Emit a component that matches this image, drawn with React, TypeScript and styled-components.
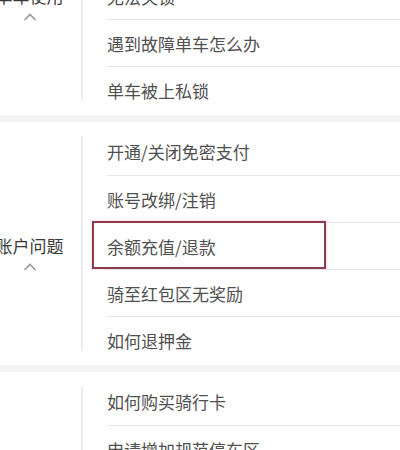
import React from 'react'
import styled, { createGlobalStyle } from 'styled-components'

const GlobalStyle = createGlobalStyle`
  html, body {
    margin: 0;
    padding: 0;
    background: #f4f4f4;
    overflow: hidden;
  }
  body {
    font-family: "Noto Sans CJK SC", "Noto Sans", sans-serif;
  }
`

interface Group {
  title: string
  items: string[]
  highlight?: number
}

const groups: Group[] = [
  {
    title: '单车使用',
    items: ['扫码开不了锁', '关锁后仍在计费', '无法关锁', '遇到故障单车怎么办', '单车被上私锁']
  },
  {
    title: '账户问题',
    items: ['开通/关闭免密支付', '账号改绑/注销', '余额充值/退款', '骑至红包区无奖励', '如何退押金'],
    highlight: 2
  },
  {
    title: '骑行卡',
    items: ['如何购买骑行卡', '申请增加规范停车区', '骑行卡退款', '骑行卡使用规则', '如何取消自动续费']
  }
]

const Page = styled.div`
  width: 422px;
  margin: -128px 0 0 -22px;
  display: flex;
  flex-direction: column;
  gap: 7px;
`

const Section = styled.section`
  display: flex;
  background: #ffffff;
`

const Side = styled.div`
  width: 103px;
  flex-shrink: 0;
  display: flex;
  flex-direction: column;
  align-items: center;
  justify-content: center;
  gap: 4px;
  padding-top: 19px;
  box-sizing: border-box;
`

const SideTitle = styled.span`
  font-size: 17px;
  line-height: 24px;
  color: #3a3a3a;
  white-space: nowrap;
`

const Divider = styled.div`
  width: 2px;
  margin: 14px 0;
  background: #ededed;
`

const List = styled.ul`
  flex: 1;
  list-style: none;
  margin: 0 0 0 24px;
  padding: 6px 0 2px;
`

const Item = styled.li<{ $first: boolean }>`
  position: relative;
  height: ${(p) => (p.$first ? 47 : 46)}px;
  border-top: ${(p) => (p.$first ? 'none' : '1px solid #e6e6e6')};
  display: flex;
  align-items: center;
  font-size: 17px;
  color: #505050;
  white-space: nowrap;
`

const Mark = styled.span`
  position: absolute;
  left: -15px;
  top: -2px;
  width: 234px;
  height: 48px;
  box-sizing: border-box;
  border: 2px solid #8a3c4c;
  box-shadow: 0 0 2px rgba(230, 120, 140, 0.6);
  pointer-events: none;
`

const Chevron = () => (
  <svg width="14" height="10" viewBox="0 0 14 10">
    <polyline points="1.5,8 7,2.5 12.5,8" fill="none" stroke="#9a9a9a" strokeWidth="1.6" />
  </svg>
)

export default function App() {
  return (
    <>
      <GlobalStyle />
      <Page>
        {groups.map((g) => (
          <Section key={g.title}>
            <Side>
              <SideTitle>{g.title}</SideTitle>
              <Chevron />
            </Side>
            <Divider />
            <List>
              {g.items.map((item, i) => (
                <Item key={item} $first={i === 0}>
                  {item}
                  {g.highlight === i && <Mark />}
                </Item>
              ))}
            </List>
          </Section>
        ))}
      </Page>
    </>
  )
}
